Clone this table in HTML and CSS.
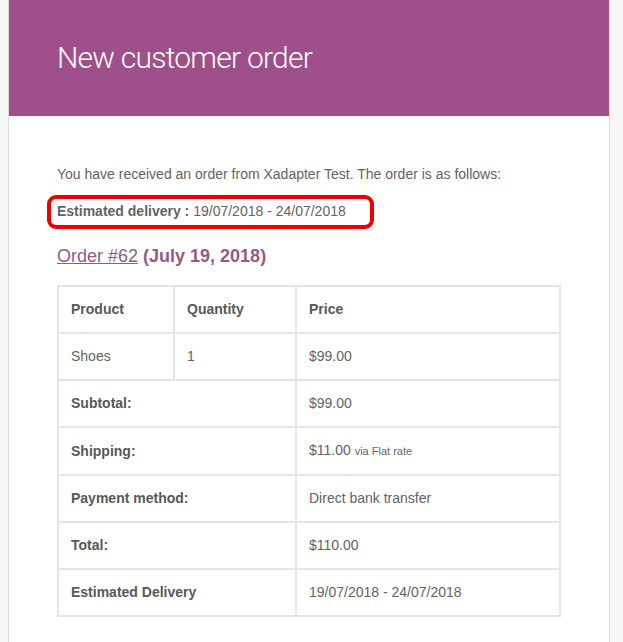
FILE: index.html
```html
<!DOCTYPE html>
<html>
<head>
<meta charset="utf-8">
<link rel="stylesheet" href="styles.css">
</head>
<body>
<div class="wrapper">
  <div class="container">
    <div class="header">
      <h1>New customer order</h1>
    </div>
    <div class="body">
      <p class="intro">You have received an order from Xadapter Test. The order is as follows:</p>
      <div class="highlight"><strong>Estimated delivery :</strong> 19/07/2018 - 24/07/2018</div>
      <h2><a class="order-link" href="#">Order #62</a> (July 19, 2018)</h2>
      <table class="order">
        <thead>
          <tr>
            <th class="c1">Product</th>
            <th class="c2">Quantity</th>
            <th class="c3">Price</th>
          </tr>
        </thead>
        <tbody>
          <tr>
            <td>Shoes</td>
            <td>1</td>
            <td>$99.00</td>
          </tr>
        </tbody>
        <tfoot>
          <tr>
            <th colspan="2">Subtotal:</th>
            <td>$99.00</td>
          </tr>
          <tr>
            <th colspan="2">Shipping:</th>
            <td>$11.00 <small>via Flat rate</small></td>
          </tr>
          <tr>
            <th colspan="2">Payment method:</th>
            <td>Direct bank transfer</td>
          </tr>
          <tr>
            <th colspan="2">Total:</th>
            <td>$110.00</td>
          </tr>
          <tr>
            <th colspan="2">Estimated Delivery</th>
            <td>19/07/2018 - 24/07/2018</td>
          </tr>
        </tfoot>
      </table>
    </div>
  </div>
</div>
</body>
</html>
```

FILE: styles.css
```css
html, body {
  margin: 0;
  padding: 0;
  background: #f7f7f7;
}

.wrapper {
  padding: 0 0 0 8px;
  height: 642px;
  overflow: hidden;
}

.container {
  width: 600px;
  border: 1px solid #dedede;
  border-top: none;
  background: #ffffff;
  min-height: 700px;
  font-family: "Liberation Sans", Arial, Helvetica, sans-serif;
}

.header {
  background: #9f4f89;
  padding: 40px 48px;
}

.header h1 {
  margin: 0;
  font-family: Roboto, "Liberation Sans", sans-serif;
  font-weight: 300;
  font-size: 30px;
  line-height: 36px;
  letter-spacing: -0.75px;
  color: #ffffff;
}

.body {
  padding: 48px 48px;
  color: #636363;
  font-size: 14px;
  line-height: 21px;
}

.intro {
  margin: 0 0 10px;
}

.highlight {
  display: inline-block;
  margin-left: -10px;
  padding: 2px 24px 3px 6px;
  border: 4px solid #f00000;
  border-radius: 9px;
}

.highlight strong {
  font-weight: bold;
}

h2 {
  margin: 16px 0 17px;
  font-size: 18px;
  line-height: 23px;
  font-weight: bold;
  color: #96588a;
}

.order-link {
  font-weight: normal;
  color: #96588a;
  text-decoration: underline;
}

.order {
  width: 100%;
  border-collapse: separate;
  border-spacing: 0;
  border: 1px solid #e5e5e5;
  color: #636363;
}

.order th,
.order td {
  border: 1px solid #e5e5e5;
  padding: 12px;
  text-align: left;
  vertical-align: middle;
  font-size: 14px;
  line-height: 21px;
}

.order th {
  font-weight: bold;
  color: #585858;
}

.order .c1 {
  width: 90px;
}

.order .c2 {
  width: 96px;
}

.order small {
  font-size: 11px;
}
```
